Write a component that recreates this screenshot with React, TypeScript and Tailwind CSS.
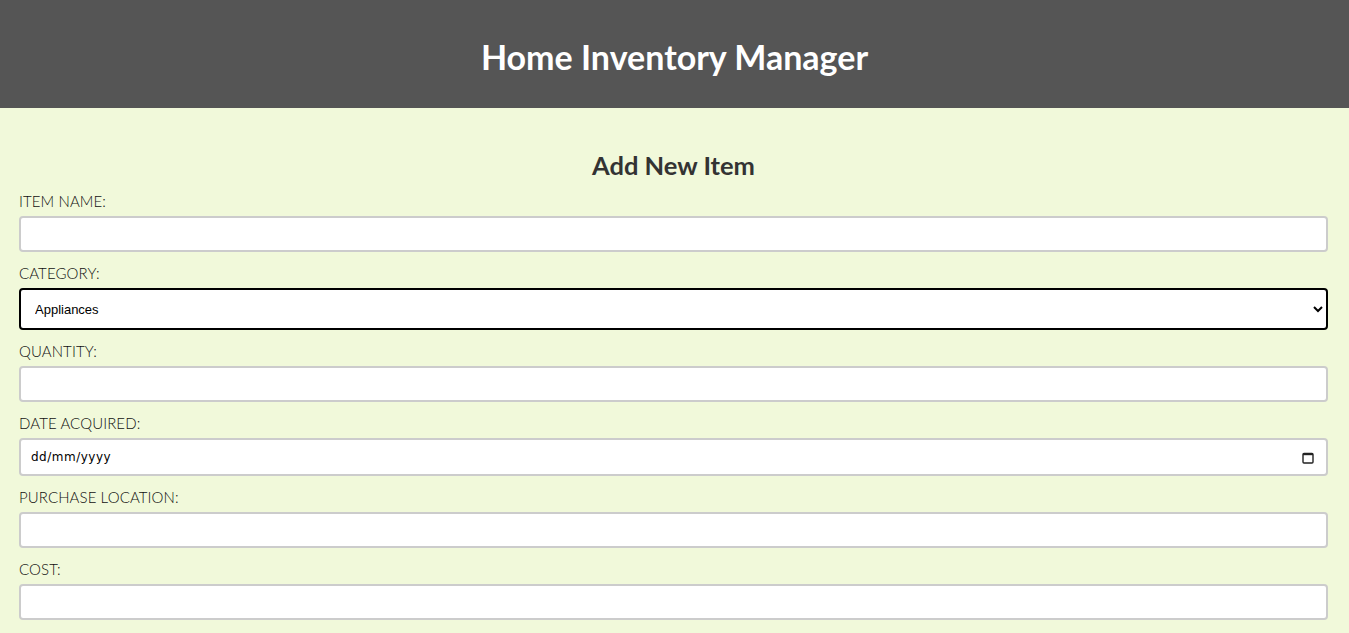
import React from "react";

const labelCls = "block text-[15px] leading-[20px] text-[#111] font-light tracking-[0.1px] mb-[5px]";
const inputCls = "block w-full h-[36px] bg-white border-2 border-[#cccccc] rounded-[4px] mb-[11px] outline-none";

export default function App() {
  return (
    <div className="h-[633px] overflow-hidden bg-[#f1f9da]" style={{ fontFamily: "Lato, 'Open Sans', sans-serif" }}>
      <header className="h-[108px] bg-[#555555] flex items-center justify-center">
        <h1 className="text-white text-[34px] font-bold leading-none mt-[6px]">Home Inventory Manager</h1>
      </header>
      <main className="pl-[19px] pr-[21px] pt-[42px]">
        <h2 className="text-center text-[#333] text-[25.5px] font-bold leading-[30px] mb-[11px]">Add New Item</h2>
        <label className={labelCls}>ITEM NAME:</label>
        <input className={inputCls} type="text" />
        <label className={labelCls}>CATEGORY:</label>
        <select
          className="block w-full h-[42px] bg-white border-2 border-black rounded-[4px] mb-[11px] pl-[10px] pr-[6px] text-[13px] text-black outline-none"
          style={{ fontFamily: "'Liberation Sans', Arial, sans-serif" }}
          defaultValue="Appliances"
        >
          <option>Appliances</option>
          <option>Electronics</option>
          <option>Furniture</option>
        </select>
        <label className={labelCls}>QUANTITY:</label>
        <input className={inputCls} type="text" />
        <label className={labelCls}>DATE ACQUIRED:</label>
        <div className="flex items-center justify-between w-full h-[38px] bg-white border-2 border-[#cccccc] rounded-[4px] mb-[11px] pl-[10px] pr-[12px]">
          <span className="text-[12px] text-black tracking-[0.5px]" style={{ fontFamily: "'DejaVu Sans', sans-serif" }}>dd/mm/yyyy</span>
          <svg width="12" height="13" viewBox="0 0 12 13" fill="none">
            <rect x="1" y="2.5" width="10" height="9.5" rx="1" stroke="#222" strokeWidth="1.4" />
            <rect x="1" y="2" width="10" height="2.2" fill="#222" />
          </svg>
        </div>
        <label className={labelCls}>PURCHASE LOCATION:</label>
        <input className={inputCls} type="text" />
        <label className={labelCls}>COST:</label>
        <input className={inputCls} type="text" />
      </main>
    </div>
  );
}
